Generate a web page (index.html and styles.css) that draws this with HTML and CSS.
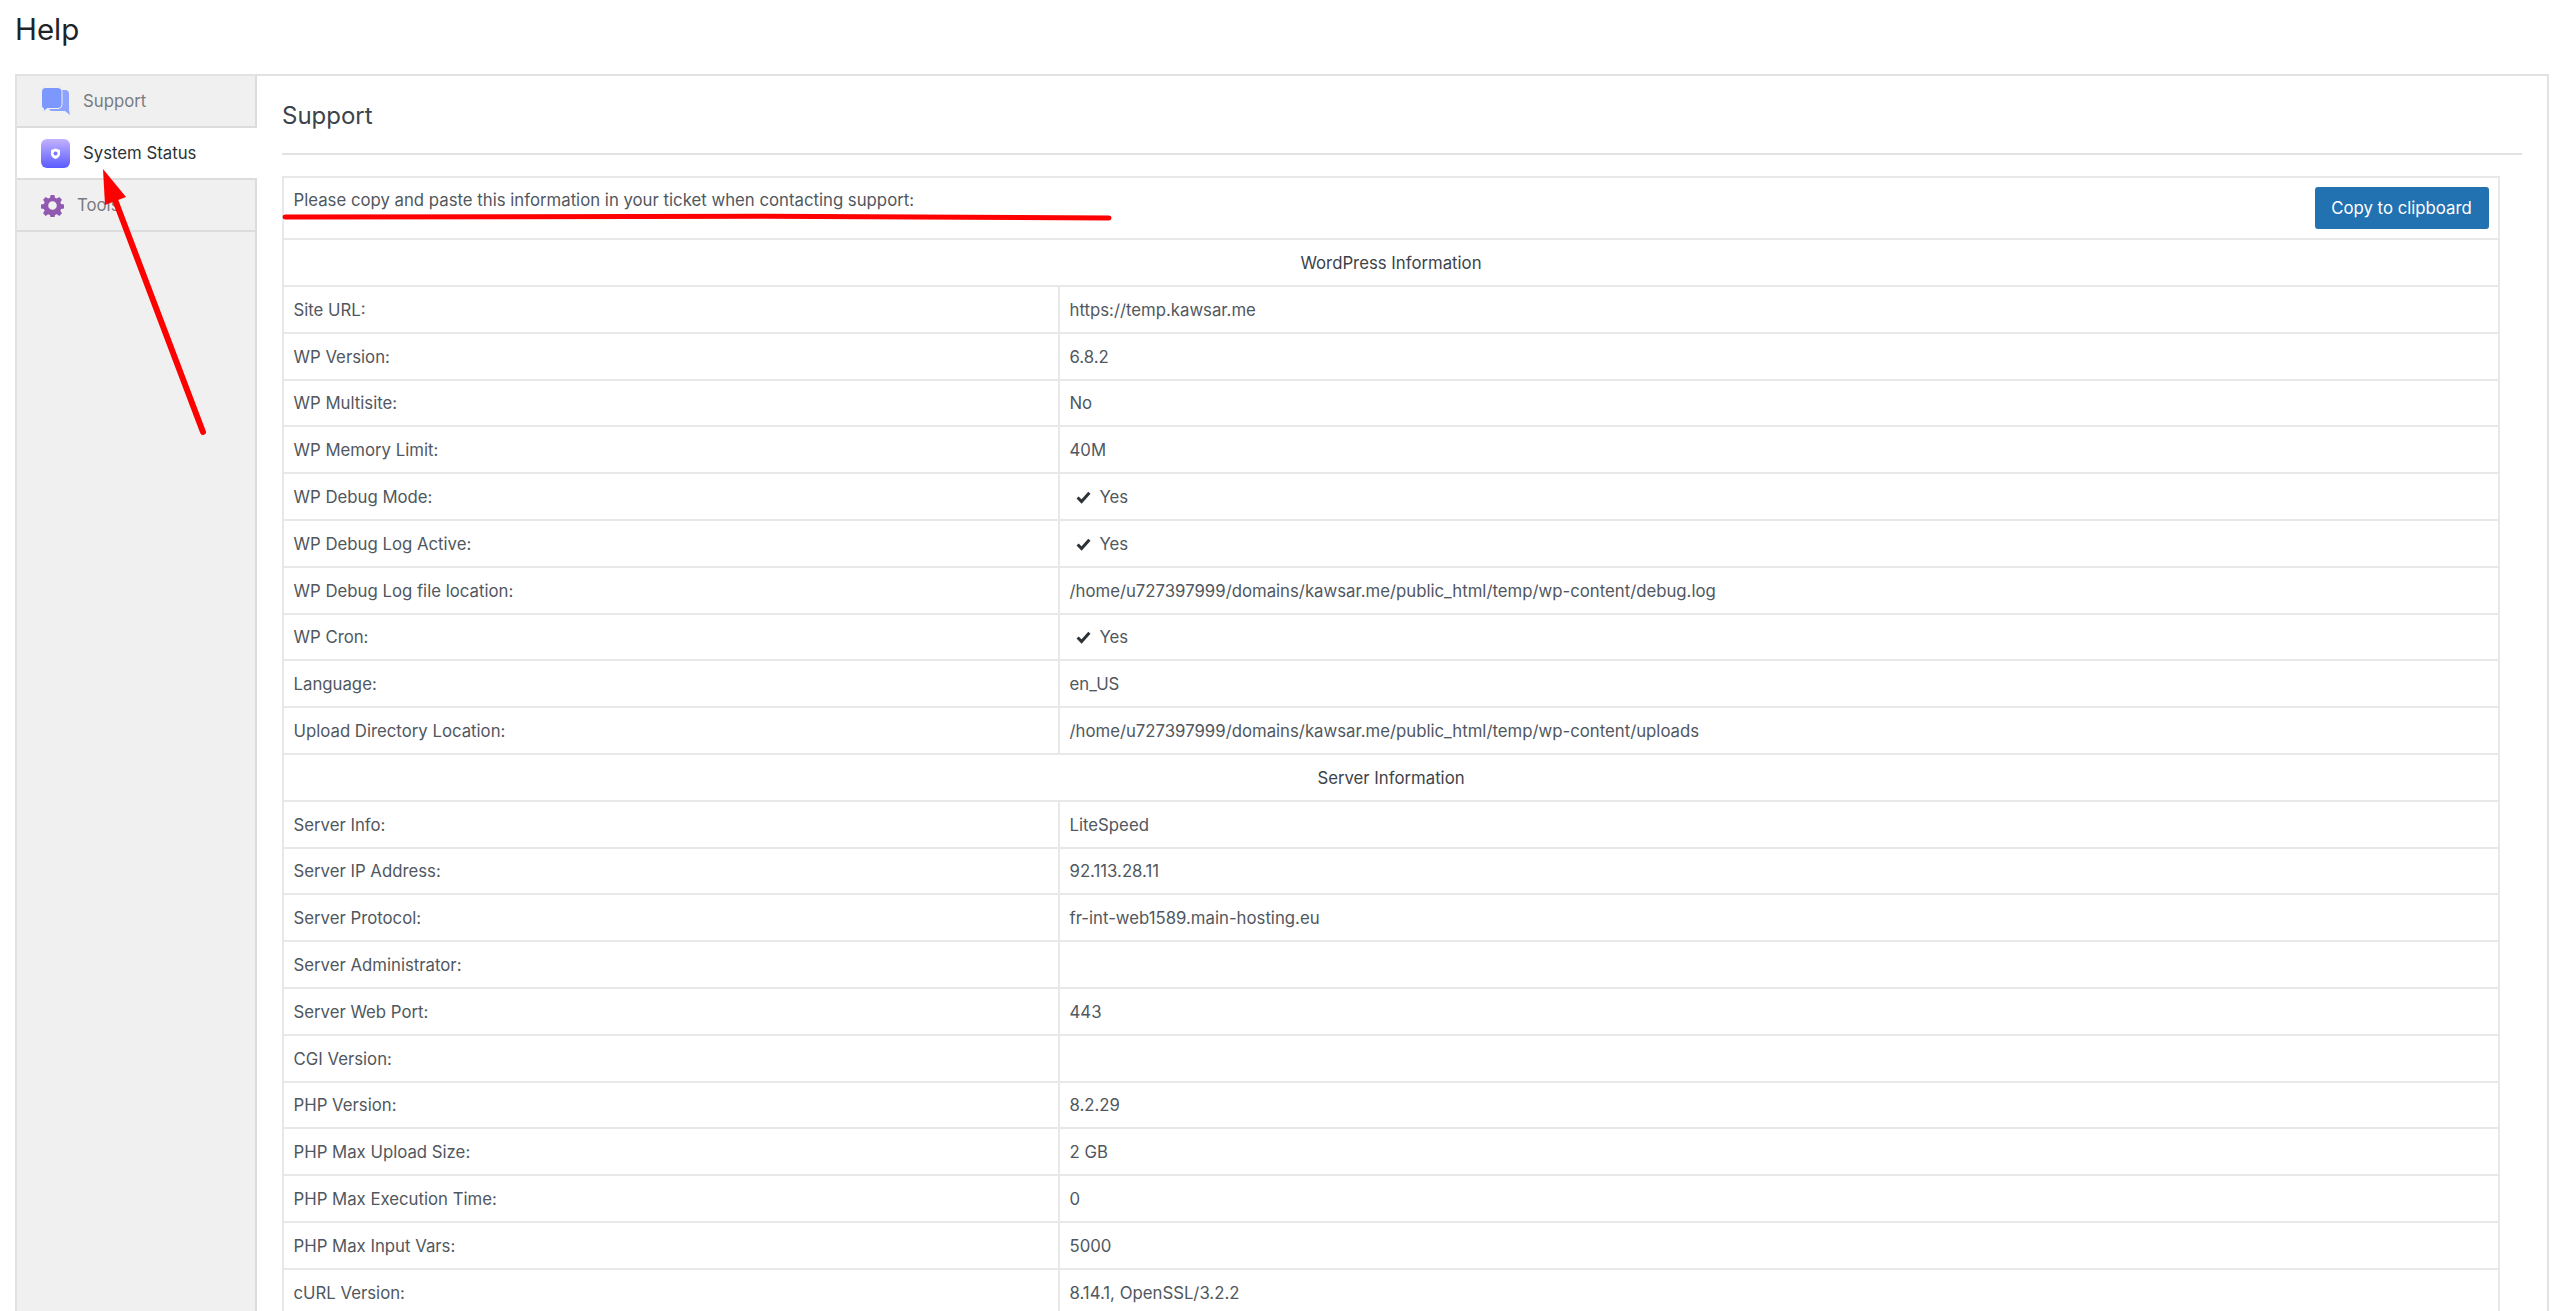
FILE: index.html
```html
<!DOCTYPE html>
<html lang="en">
<head>
<meta charset="utf-8">
<title>Help</title>
<link rel="stylesheet" href="styles.css">
</head>
<body>
<h1 class="page-title">Help</h1>
<div class="panel">
  <nav class="side">
    <a class="tab">
      <svg class="tab-icon" viewBox="0 0 29 29"><path fill="#8ea3ff" d="M14 3h10a4 4 0 0 1 4 4v16l1 5-5-4H11a3 3 0 0 1-3-3V8z"/><path fill="#7c98ff" stroke="#f0f0f0" stroke-width="1" d="M4 0.5h13a4 4 0 0 1 4 4v13a4 4 0 0 1-4 4H6l-3 3-.5-3A3 3 0 0 1 0.500 18V4a4 4 0 0 1 3.500-3.500z"/></svg>
      <span>Support</span>
    </a>
    <a class="tab tab-active">
      <svg class="tab-icon" viewBox="0 0 29 29"><defs><linearGradient id="sq" x1="0" y1="0" x2="0" y2="1"><stop offset="0" stop-color="#c3b2ff"/><stop offset="1" stop-color="#5a5cff"/></linearGradient></defs><rect width="29" height="29" rx="6" fill="url(#sq)"/><path fill="#fff" d="M14.500 9.500l4.500 1.500v4c0 2.500-2 4-4.500 5-2.500-1-4.500-2.500-4.500-5v-4z"/><circle cx="14.500" cy="14.500" r="2" fill="#7d78ff"/></svg>
      <span>System Status</span>
    </a>
    <a class="tab tab-tools">
      <svg class="tab-icon tab-gear" viewBox="0 0 24 24"><path fill="#9159b0" fill-rule="evenodd" d="M10 1h4l.6 3 1.900.8 2.600-1.700 2.800 2.800-1.700 2.600.8 1.900 3 .6v4l-3 .6-.8 1.900 1.700 2.600-2.800 2.800-2.600-1.700-1.900.8-.6 3h-4l-.6-3-1.900-.8-2.600 1.700-2.800-2.800 1.700-2.600-.8-1.900-3-.6v-4l3-.6.8-1.900-1.700-2.600 2.800-2.800 2.600 1.700 1.900-.8zM12 7.500a4.500 4.500 0 1 0 0 9 4.500 4.500 0 0 0 0-9z"/></svg>
      <span>Tools</span>
    </a>
  </nav>
  <main class="content">
    <h2 class="section-title">Support</h2>
    <table class="info">
      <colgroup><col class="col-label"><col></colgroup>
      <tbody>
        <tr class="intro"><td colspan="2"><div class="intro-row"><span>Please copy and paste this information in your ticket when contacting support:</span><button class="copy" type="button">Copy to clipboard</button></div></td></tr>
        <tr><th colspan="2">WordPress Information</th></tr>
        <tr><td>Site URL:</td><td>https://temp.kawsar.me</td></tr>
        <tr><td>WP Version:</td><td>6.8.2</td></tr>
        <tr><td>WP Multisite:</td><td>No</td></tr>
        <tr><td>WP Memory Limit:</td><td>40M</td></tr>
        <tr><td>WP Debug Mode:</td><td class="yes"><svg class="check" viewBox="0 0 14 12"><path fill="none" stroke="#2c3338" stroke-width="2.800" d="M1.500 6l3.700 3.800L12.500 1.500"/></svg>Yes</td></tr>
        <tr><td>WP Debug Log Active:</td><td class="yes"><svg class="check" viewBox="0 0 14 12"><path fill="none" stroke="#2c3338" stroke-width="2.800" d="M1.500 6l3.700 3.800L12.500 1.500"/></svg>Yes</td></tr>
        <tr><td>WP Debug Log file location:</td><td>/home/u727397999/domains/kawsar.me/public_html/temp/wp-content/debug.log</td></tr>
        <tr><td>WP Cron:</td><td class="yes"><svg class="check" viewBox="0 0 14 12"><path fill="none" stroke="#2c3338" stroke-width="2.800" d="M1.500 6l3.700 3.800L12.500 1.500"/></svg>Yes</td></tr>
        <tr><td>Language:</td><td>en_US</td></tr>
        <tr><td>Upload Directory Location:</td><td>/home/u727397999/domains/kawsar.me/public_html/temp/wp-content/uploads</td></tr>
        <tr><th colspan="2">Server Information</th></tr>
        <tr><td>Server Info:</td><td>LiteSpeed</td></tr>
        <tr><td>Server IP Address:</td><td>92.113.28.11</td></tr>
        <tr><td>Server Protocol:</td><td>fr-int-web1589.main-hosting.eu</td></tr>
        <tr><td>Server Administrator:</td><td></td></tr>
        <tr><td>Server Web Port:</td><td>443</td></tr>
        <tr><td>CGI Version:</td><td></td></tr>
        <tr><td>PHP Version:</td><td>8.2.29</td></tr>
        <tr><td>PHP Max Upload Size:</td><td>2 GB</td></tr>
        <tr><td>PHP Max Execution Time:</td><td>0</td></tr>
        <tr><td>PHP Max Input Vars:</td><td>5000</td></tr>
        <tr><td>cURL Version:</td><td>8.14.1, OpenSSL/3.2.2</td></tr>
      </tbody>
    </table>
  </main>
</div>
<svg class="marks" viewBox="0 0 2560 1311" aria-hidden="true">
  <path d="M285 217C500 215 850 216 1109 218" fill="none" stroke="#fe0000" stroke-width="5" stroke-linecap="round"/>
  <path d="M203 432L114 197" fill="none" stroke="#fe0000" stroke-width="6" stroke-linecap="round"/>
  <path d="M103 169L126 197 105 205z" fill="#fe0000"/>
</svg>
</body>
</html>
```
FILE: styles.css
```css
html, body {
  margin: 0;
  height: 1311px;
  overflow: hidden;
  background: #fff;
}
body {
  position: relative;
  font-family: Inter, "Liberation Sans", sans-serif;
  font-size: 16.75px;
  color: #50575e;
}
.page-title {
  margin: 0;
  padding: 12px 0 0 15px;
  height: 74px;
  box-sizing: border-box;
  font-size: 29.5px;
  line-height: 34px;
  font-weight: 400;
  color: #1d2327;
}
.panel {
  display: flex;
  margin: 0 11px 0 15px;
  height: 1400px;
  border: 2px solid #e2e2e2;
  box-sizing: border-box;
  background: #fff;
}
.side {
  flex: 0 0 240px;
  background: #f0f0f0;
  border-right: 2px solid #dcdcdc;
  box-sizing: border-box;
}
.tab {
  display: flex;
  align-items: center;
  height: 50px;
  padding-left: 24px;
  border-bottom: 2px solid #dcdcdc;
  color: #787c82;
}
.tab span { margin-left: 13px; }
.tab-active {
  background: #fff;
  color: #2c3338;
  margin-right: -2px;
  position: relative;
}
.tab-icon {
  width: 29px;
  height: 29px;
  flex: none;
}
.tab-gear { width: 23px; height: 23px; }
.content {
  flex: 1;
  padding: 0 25px;
  min-width: 0;
}
.section-title {
  margin: 0;
  height: 79px;
  box-sizing: border-box;
  padding-top: 26px;
  font-size: 24px;
  line-height: 28px;
  font-weight: 400;
  color: #3c434a;
  border-bottom: 2px solid #e2e2e2;
}
.info {
  margin-top: 21px;
  width: 2218px;
  border-collapse: collapse;
  table-layout: fixed;
}
.col-label { width: 776px; }
.info td, .info th {
  height: 47px;
  box-sizing: border-box;
  padding: 0 9.500px;
  border: 2px solid #e8e8e8;
  font-weight: 400;
  text-align: left;
}
.info tr:nth-child(5n) td { height: 46px; }
.info th { text-align: center; color: #3c434a; }
.info .intro td { height: 62px; }
.intro-row {
  display: flex;
  align-items: center;
  justify-content: space-between;
}
.intro-row span { margin-top: -17px; }
.copy {
  width: 174px;
  height: 42px;
  border: 0;
  border-radius: 3px;
  background: #2271b1;
  color: #fff;
  font: inherit;
  padding: 0;
}
.yes .check {
  width: 15px;
  height: 13px;
  margin: 0 9px 0 6px;
  vertical-align: -1px;
}
.marks {
  position: absolute;
  left: 0;
  top: 0;
  width: 2560px;
  height: 1311px;
  pointer-events: none;
}
```
